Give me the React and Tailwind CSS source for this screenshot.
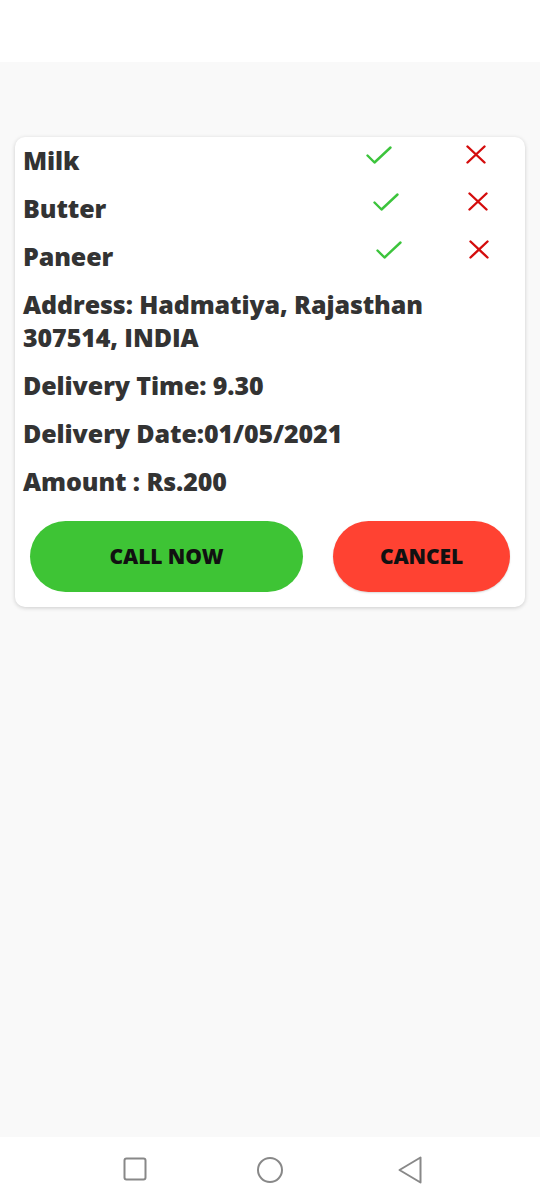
import React from "react";

function Check() {
  return (
    <svg width="26" height="18" viewBox="0 0 26 18" fill="none">
      <path d="M1.5 9.5 L8.5 16.5 L24.5 1.5" stroke="#3cc43c" strokeWidth="2.4" strokeLinecap="round" strokeLinejoin="round" />
    </svg>
  );
}

function Cross() {
  return (
    <svg width="20" height="19" viewBox="0 0 20 19" fill="none">
      <path d="M1.5 1.5 L18.5 17.5 M18.5 1.5 L1.5 17.5" stroke="#d40c0c" strokeWidth="2.4" strokeLinecap="round" />
    </svg>
  );
}

export default function App() {
  return (
    <div className="w-[540px] h-[1200px] flex flex-col bg-[#f9f9f9] text-[#333333]" style={{ fontFamily: "'Open Sans', 'Noto Sans', sans-serif" }}>
      <div className="h-[62px] bg-white shrink-0" />
      <div className="flex-1 px-[15px] pt-[75px]">
        <div className="bg-white rounded-[10px] shadow-[0_1px_4px_rgba(0,0,0,0.18)] pl-[8px] pt-[7px] pb-[15px] flex flex-col gap-[15px] font-extrabold text-[25px] leading-[33px] tracking-[-0.1px]">
          <div className="flex items-start">
            <span className="flex-1">Milk</span>
            <span className="mt-[2px] w-[26px]"><Check /></span>
            <span className="mt-[1px] ml-[74px] w-[20px] mr-[39px]"><Cross /></span>
          </div>
          <div className="flex items-start">
            <span className="flex-1">Butter</span>
            <span className="mt-[1px] w-[26px]"><Check /></span>
            <span className="mt-[0px] ml-[69px] w-[20px] mr-[37px]"><Cross /></span>
          </div>
          <div className="flex items-start">
            <span className="flex-1">Paneer</span>
            <span className="mt-[1px] w-[26px]"><Check /></span>
            <span className="mt-[0px] ml-[67px] w-[20px] mr-[36px]"><Cross /></span>
          </div>
          <div>Address: Hadmatiya, Rajasthan<br />307514, INDIA</div>
          <div>Delivery Time: 9.30</div>
          <div>Delivery Date:01/05/2021</div>
          <div>Amount : Rs.200</div>
          <div className="flex mt-[8px] pl-[7px]">
            <button className="w-[273px] h-[71px] rounded-full bg-[#3ec435] text-[#111] text-[21px] font-extrabold">CALL NOW</button>
            <button className="ml-[30px] w-[177px] h-[71px] rounded-full bg-[#ff4232] text-[#111] text-[21px] font-extrabold shadow-[0_1px_2px_rgba(0,0,0,0.15)]">CANCEL</button>
          </div>
        </div>
      </div>
      <div className="h-[63px] bg-white shrink-0 relative">
        <svg className="absolute left-[123px] top-[20px]" width="24" height="24" viewBox="0 0 24 24" fill="none">
          <rect x="1.5" y="1.5" width="21" height="21" rx="2" stroke="#888" strokeWidth="2" />
        </svg>
        <svg className="absolute left-[256px] top-[19px]" width="28" height="28" viewBox="0 0 28 28" fill="none">
          <circle cx="14" cy="14" r="12" stroke="#888" strokeWidth="2" />
        </svg>
        <svg className="absolute left-[398px] top-[19px]" width="25" height="28" viewBox="0 0 25 28" fill="none">
          <path d="M22.5 1.5 L22.5 26.5 L1.5 14 Z" stroke="#888" strokeWidth="2" strokeLinejoin="round" />
        </svg>
      </div>
    </div>
  );
}
